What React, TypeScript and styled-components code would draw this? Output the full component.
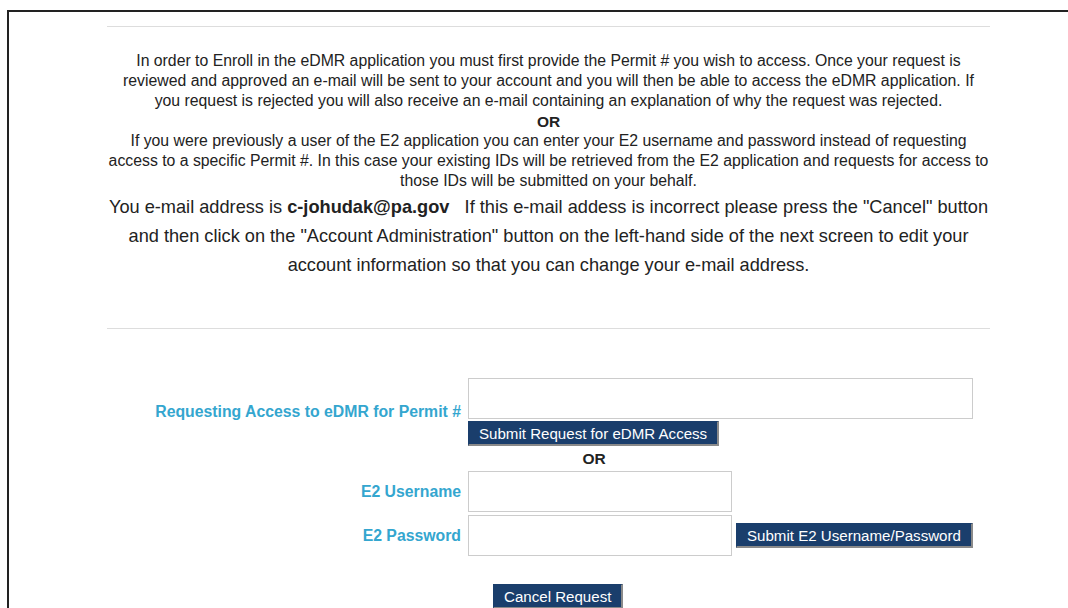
import React from "react";
import styled, { createGlobalStyle } from "styled-components";

const GlobalStyle = createGlobalStyle`
  html, body {
    margin: 0;
    padding: 0;
    background: #fff;
    overflow: hidden;
  }
  body {
    font-family: "Liberation Sans", Arial, sans-serif;
    color: #222;
  }
`;

const Frame = styled.div`
  margin: 10px 0 0 7px;
  border-top: 2px solid #222;
  border-left: 2px solid #222;
  height: 620px;
`;

const Content = styled.div`
  width: 883px;
  margin-left: 98px;
  padding-top: 14px;
`;

const Rule = styled.hr`
  border: 0;
  border-top: 1px solid #ddd;
  margin: 0;
`;

const Intro = styled.div`
  margin-top: 24px;
  text-align: center;
  font-size: 15.8px;
  line-height: 20px;
`;

const Or = styled.div`
  font-weight: bold;
  font-size: 15.5px;
  line-height: 20px;
  padding-top: 1px;
  margin-bottom: -1px;
  text-align: center;
`;

const EmailNote = styled.p`
  margin: 2px 0 0;
  text-align: center;
  font-size: 18.2px;
  line-height: 29px;
`;

const Gap = styled.div<{ $h: number }>`
  height: ${(p) => p.$h}px;
`;

const Form = styled.div`
  margin-top: 49px;
  display: grid;
  grid-template-columns: 361px 264px 241px;
  align-items: center;
`;

const Label = styled.label`
  grid-column: 1;
  text-align: right;
  padding-right: 7px;
  font-size: 15.8px;
  font-weight: bold;
  color: #34a6cf;
`;

const Field = styled.div<{ $span?: number }>`
  grid-column: ${(p) => (p.$span ? `2 / span ${p.$span}` : "2")};
  display: flex;
  flex-direction: column;
  align-items: flex-start;
  gap: 2px;
`;

const TextInput = styled.input<{ $width: number }>`
  box-sizing: border-box;
  width: ${(p) => p.$width}px;
  height: 41px;
  border: 1px solid #ccc;
  background: #fff;
  margin: 0;
  padding: 0 6px;
  font: 14px "Liberation Sans", Arial, sans-serif;
`;

const Button = styled.button`
  box-sizing: border-box;
  height: 25px;
  padding: 0 10px;
  margin: 0;
  background: #1a3e6c;
  color: #fff;
  font: 15.1px "Liberation Sans", Arial, sans-serif;
  border-style: solid;
  border-width: 1px 2px 2px 1px;
  border-color: #1a3e6c #8a8a8a #8a8a8a #1a3e6c;
  cursor: pointer;
`;

const FormOr = styled(Or)`
  grid-column: 2;
  width: 252px;
  line-height: 16px;
  padding-top: 0;
  margin: 5px 0 4px;
`;

const SideAction = styled.div`
  grid-column: 3;
  padding-left: 4px;
`;

const Spacer = styled.div`
  grid-column: 1;
  height: 3px;
`;

const CancelRow = styled.div`
  margin: 28px 0 0 386px;
`;

export default function App() {
  return (
    <>
      <GlobalStyle />
      <Frame>
        <Content>
          <Rule />
          <Intro>
            In order to Enroll in the eDMR application you must first provide the Permit # you wish to access. Once
            your request is
            <br />
            reviewed and approved an e-mail will be sent to your account and you will then be able to access the eDMR
            application. If
            <br />
            you request is rejected you will also receive an e-mail containing an explanation of why the request was
            rejected.
            <Or>OR</Or>
            If you were previously a user of the E2 application you can enter your E2 username and password instead of
            requesting
            <br />
            access to a specific Permit #. In this case your existing IDs will be retrieved from the E2 application and
            requests for access to
            <br />
            those IDs will be submitted on your behalf.
          </Intro>
          <EmailNote>
            You e-mail address is <b>c-johudak@pa.gov</b>&nbsp;&nbsp;&nbsp;If this e-mail addess is incorrect please
            press the "Cancel" button
            <br />
            and then click on the "Account Administration" button on the left-hand side of the next screen to edit
            your
            <br />
            account information so that you can change your e-mail address.
          </EmailNote>
          <Gap $h={48} />
          <Rule />
          <Form>
            <Label htmlFor="permit">Requesting Access to eDMR for Permit #</Label>
            <Field $span={2}>
              <TextInput id="permit" $width={505} />
              <Button>Submit Request for eDMR Access</Button>
            </Field>
            <FormOr>OR</FormOr>
            <Label htmlFor="e2user">E2 Username</Label>
            <Field>
              <TextInput id="e2user" $width={264} />
            </Field>
            <Spacer />
            <Label htmlFor="e2pass">E2 Password</Label>
            <Field>
              <TextInput id="e2pass" type="password" $width={264} />
            </Field>
            <SideAction>
              <Button>Submit E2 Username/Password</Button>
            </SideAction>
          </Form>
          <CancelRow>
            <Button>Cancel Request</Button>
          </CancelRow>
        </Content>
      </Frame>
    </>
  );
}
